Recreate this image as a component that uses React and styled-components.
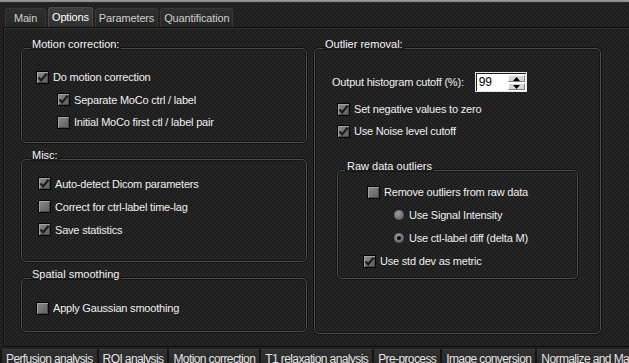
import React from "react";
import styled, { createGlobalStyle } from "styled-components";

const Global = createGlobalStyle`
  html, body { margin: 0; padding: 0; background: #222; overflow: hidden; }
  body { font-family: "Liberation Sans", Arial, sans-serif; }
  * { box-sizing: border-box; }
`;

const Window = styled.div`
  width: 629px;
  height: 363px;
  overflow: hidden;
  display: flex;
  flex-direction: column;
  color: #f0f0f0;
  font-size: 11px;
  letter-spacing: -0.2px;
  background-color: #252525;
  background-image:
    linear-gradient(45deg, #1d1d1d 25%, transparent 25%, transparent 75%, #1d1d1d 75%),
    linear-gradient(45deg, #1d1d1d 25%, transparent 25%, transparent 75%, #1d1d1d 75%);
  background-size: 4px 4px;
  background-position: 0 0, 2px 2px;
`;

const TopRule = styled.div`
  height: 3px;
  flex: none;
  background: linear-gradient(#a0a0a0, #808080 66%, #2a2a2a 66%);
`;

const TabBar = styled.div`
  height: 24px;
  flex: none;
  display: flex;
  align-items: flex-end;
  gap: 2px;
  padding-left: 5px;
`;

const Tab = styled.div`
  height: ${(p) => (p.$active ? 20 : 19)}px;
  min-width: 41px;
  padding: 0 3px;
  display: flex;
  align-items: center;
  justify-content: center;
  padding-bottom: ${(p) => (p.$active ? 2 : 0)}px;
  border: 1px solid ${(p) => (p.$active ? "#4a4a4a" : "#383838")};
  border-bottom: none;
  border-radius: 3px 3px 0 0;
  background: ${(p) =>
    p.$active
      ? "linear-gradient(#3e3e3e, #303030)"
      : "linear-gradient(#2f2f2f, #262626)"};
  color: ${(p) => (p.$active ? "#ffffff" : "#cfcfcf")};
  font-size: 11px;
  letter-spacing: -0.15px;
`;

const Panel = styled.div`
  height: 320px;
  flex: none;
  margin-left: 3px;
  border-top: 1px solid #0c0c0c;
  border-left: 1px solid #0c0c0c;
  border-bottom: 1px solid #0c0c0c;
  box-shadow: inset 1px 1px 0 #303030;
  display: grid;
  grid-template-columns: 286px 287px;
  column-gap: 7px;
  align-items: start;
  padding: 10px 0 0 17px;
`;

const Column = styled.div`
  display: flex;
  flex-direction: column;
  gap: 6px;
`;

const Group = styled.fieldset`
  margin: 0;
  padding: 0;
  min-width: 0;
  height: ${(p) => p.$h}px;
  border: 1px solid #4a4a4a;
  border-radius: 5px;
  box-shadow: 0 0 0 1px rgba(0, 0, 0, 0.45), inset 0 0 0 1px rgba(0, 0, 0, 0.35);
`;

const Legend = styled.legend`
  margin-left: ${(p) => p.$ml ?? 8}px;
  padding: 0 2px 8px;
  line-height: 13px;
  font-size: 11px;
  letter-spacing: 0;
  color: #f4f4f4;
`;

const Body = styled.div`
  display: flex;
  flex-direction: column;
  padding: ${(p) => p.$pad};
`;

const Row = styled.label`
  display: flex;
  align-items: center;
  gap: 4px;
  height: ${(p) => p.$h ?? 22.5}px;
  padding-left: ${(p) => p.$indent ?? 0}px;
  white-space: nowrap;
`;

const Box = styled.span`
  width: 13px;
  height: 13px;
  flex: none;
  display: inline-flex;
  align-items: center;
  justify-content: center;
  border: 1px solid #050505;
  background: linear-gradient(135deg, #8c8c8c, #5c5c5c);
  box-shadow: inset 1px 1px 0 #a2a2a2, inset -1px -1px 0 #4a4a4a;
`;

const Radio = styled.span`
  width: 12px;
  height: 12px;
  flex: none;
  border-radius: 50%;
  border: 1px solid #1a1a1a;
  background: radial-gradient(circle at 40% 35%, #a0a0a0, #5e5e5e 75%);
  position: relative;
  &::after {
    content: "";
    display: ${(p) => (p.$on ? "block" : "none")};
    position: absolute;
    left: 3px;
    top: 3px;
    width: 4px;
    height: 4px;
    border-radius: 50%;
    background: #0a0a0a;
  }
`;

const SpinRow = styled.div`
  display: flex;
  align-items: center;
  gap: 11px;
  height: 20px;
  margin-bottom: 6px;
  padding-left: 17px;
`;

const Spin = styled.div`
  width: 52px;
  height: 20px;
  display: flex;
  border: 1px solid #e6e6e6;
  background: #fff;
  box-shadow: inset 1px 1px 0 #1a1a1a;
  padding: 2px 1px 1px 2px;
`;

const SpinValue = styled.span`
  flex: 1;
  color: #000;
  font-size: 12px;
  line-height: 15px;
  padding-left: 1px;
`;

const SpinButtons = styled.div`
  width: 17px;
  display: flex;
  flex-direction: column;
  gap: 1px;
`;

const SpinButton = styled.div`
  flex: 1;
  display: flex;
  align-items: center;
  justify-content: center;
  background: #d6d6d6;
  border-top: 1px solid #fafafa;
  border-left: 1px solid #fafafa;
  border-right: 1px solid #808080;
  border-bottom: 1px solid #808080;
`;

const Inner = styled.div`
  margin: 18px 0 0 22px;
  width: 241px;
`;

const BottomBar = styled.div`
  margin-top: 2px;
  height: 18px;
  flex: none;
  display: flex;
  gap: 2px;
  padding-left: 2px;
  background: #141414;
`;

const BottomTab = styled.div`
  padding: 2px 4px 0;
  background: linear-gradient(#303030, #282828);
  border-top: 1px solid #3a3a3a;
  color: #e4e4e4;
  font-size: 12px;
  letter-spacing: -0.6px;
  white-space: nowrap;
  flex: none;
`;

const Check = ({ on }) => (
  <Box>
    {on && (
      <svg width="11" height="11" viewBox="0 0 11 11">
        <path d="M1.5 5.5 L4.2 8.3 L9.6 1.8" fill="none" stroke="#1c1c1c" strokeWidth="2.2" />
      </svg>
    )}
  </Box>
);

const CheckRow = ({ on, children, indent, h }) => (
  <Row $indent={indent} $h={h}>
    <Check on={on} />
    <span>{children}</span>
  </Row>
);

const RadioRow = ({ on, children, indent }) => (
  <Row $indent={indent} $h={23.5}>
    <Radio $on={on} />
    <span>{children}</span>
  </Row>
);

const Arrow = ({ up }) => (
  <svg width="7" height="4" viewBox="0 0 7 4">
    <path d={up ? "M0 4 L3.5 0 L7 4 Z" : "M0 0 L7 0 L3.5 4 Z"} fill="#000" />
  </svg>
);

const topTabs = ["Main", "Options", "Parameters", "Quantification"];
const bottomTabs = [
  "Perfusion analysis",
  "ROI analysis",
  "Motion correction",
  "T1 relaxation analysis",
  "Pre-process",
  "Image conversion",
  "Normalize and Mask",
];

export default function App() {
  return (
    <Window>
      <Global />
      <TopRule />
      <TabBar>
        {topTabs.map((t) => (
          <Tab key={t} $active={t === "Options"}>
            {t}
          </Tab>
        ))}
      </TabBar>
      <Panel>
        <Column>
          <Group $h={105}>
            <Legend>Motion correction:</Legend>
            <Body $pad="7px 0 0 14px">
              <CheckRow on>Do motion correction</CheckRow>
              <CheckRow on indent={21}>Separate MoCo ctrl / label</CheckRow>
              <CheckRow indent={21}>Initial MoCo first ctl / label pair</CheckRow>
            </Body>
          </Group>
          <Group $h={113}>
            <Legend>Misc:</Legend>
            <Body $pad="2px 0 0 16px">
              <CheckRow on h={23}>Auto-detect Dicom parameters</CheckRow>
              <CheckRow h={23}>Correct for ctrl-label time-lag</CheckRow>
              <CheckRow on h={23}>Save statistics</CheckRow>
            </Body>
          </Group>
          <Group $h={64}>
            <Legend>Spatial smoothing</Legend>
            <Body $pad="8px 0 0 14px">
              <CheckRow>Apply Gaussian smoothing</CheckRow>
            </Body>
          </Group>
        </Column>
        <Column>
          <Group $h={296}>
            <Legend $ml={8}>Outlier removal:</Legend>
            <Body $pad="13px 0 0 0">
              <SpinRow>
                <span>Output histogram cutoff (%):</span>
                <Spin>
                  <SpinValue>99</SpinValue>
                  <SpinButtons>
                    <SpinButton>
                      <Arrow up />
                    </SpinButton>
                    <SpinButton>
                      <Arrow />
                    </SpinButton>
                  </SpinButtons>
                </Spin>
              </SpinRow>
              <CheckRow on indent={22} h={22}>Set negative values to zero</CheckRow>
              <CheckRow on indent={22} h={22}>Use Noise level cutoff</CheckRow>
              <Inner>
                <Group $h={119}>
                  <Legend $ml={7}>Raw data outliers</Legend>
                  <Body $pad="0 0 0 0">
                    <CheckRow indent={29} h={22}>Remove outliers from raw data</CheckRow>
                    <RadioRow indent={55}>Use Signal Intensity</RadioRow>
                    <RadioRow on indent={55}>Use ctl-label diff (delta M)</RadioRow>
                    <CheckRow on indent={25} h={22}>Use std dev as metric</CheckRow>
                  </Body>
                </Group>
              </Inner>
            </Body>
          </Group>
        </Column>
      </Panel>
      <BottomBar>
        {bottomTabs.map((t) => (
          <BottomTab key={t}>{t}</BottomTab>
        ))}
      </BottomBar>
    </Window>
  );
}
